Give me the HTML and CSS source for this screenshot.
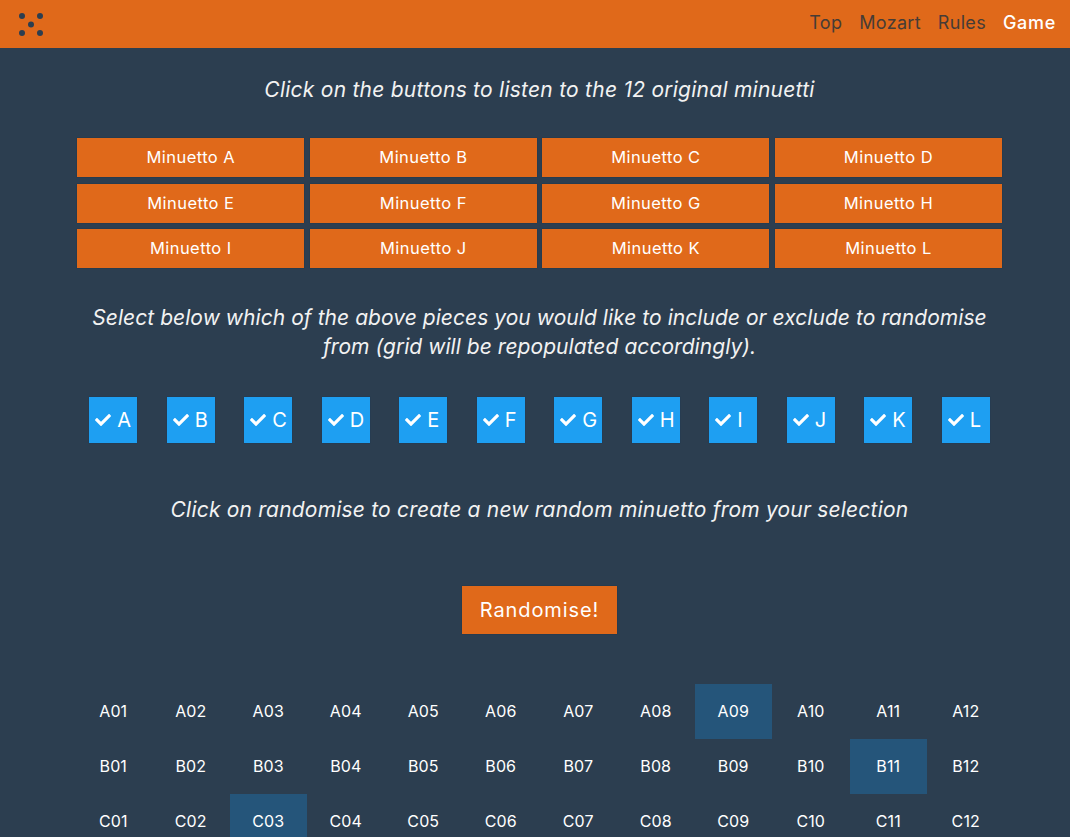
FILE: index.html
```html
<!DOCTYPE html>
<html lang="en">
<head>
<meta charset="utf-8">
<title>Mozart Minuetti</title>
<link rel="stylesheet" href="styles.css">
</head>
<body>
<svg class="defs" width="0" height="0" aria-hidden="true">
  <symbol id="tick" viewBox="0 0 512 512">
    <path d="M173.898 439.404l-166.4-166.4c-9.997-9.997-9.997-26.206 0-36.204l36.203-36.204c9.997-9.998 26.207-9.998 36.204 0L192 312.69 432.095 72.596c9.997-9.997 26.207-9.997 36.204 0l36.203 36.204c9.997 9.997 9.997 26.206 0 36.204l-294.4 294.401c-9.998 9.997-26.207 9.997-36.204-.001z"/>
  </symbol>
</svg>
<header class="navbar">
  <svg class="logo" width="26" height="24" viewBox="0 0 26 24" aria-hidden="true">
    <circle cx="4" cy="4" r="3" fill="#2c3e50"/><circle cx="22" cy="4" r="3" fill="#2c3e50"/>
    <circle cx="13" cy="12.500" r="3" fill="#2c3e50"/>
    <circle cx="4" cy="21" r="3" fill="#2c3e50"/><circle cx="22" cy="21" r="3" fill="#2c3e50"/>
  </svg>
  <nav class="nav-links">
    <a class="nav-link">Top</a><a class="nav-link">Mozart</a><a class="nav-link">Rules</a><a class="nav-link active">Game</a>
  </nav>
</header>
<main class="content">
  <p class="lead lead-first">Click on the buttons to listen to the 12 original minuetti</p>
  <div class="pieces">
    <button class="piece">Minuetto A</button><button class="piece">Minuetto B</button><button class="piece">Minuetto C</button><button class="piece">Minuetto D</button>
    <button class="piece">Minuetto E</button><button class="piece">Minuetto F</button><button class="piece">Minuetto G</button><button class="piece">Minuetto H</button>
    <button class="piece">Minuetto I</button><button class="piece">Minuetto J</button><button class="piece">Minuetto K</button><button class="piece">Minuetto L</button>
  </div>
  <p class="lead lead-select">Select below which of the above pieces you would like to include or exclude to randomise from (grid will be repopulated accordingly).</p>
  <div class="checks">
    <div class="check"><svg class="tick"><use href="#tick"/></svg>A</div>
    <div class="check"><svg class="tick"><use href="#tick"/></svg>B</div>
    <div class="check"><svg class="tick"><use href="#tick"/></svg>C</div>
    <div class="check"><svg class="tick"><use href="#tick"/></svg>D</div>
    <div class="check"><svg class="tick"><use href="#tick"/></svg>E</div>
    <div class="check"><svg class="tick"><use href="#tick"/></svg>F</div>
    <div class="check"><svg class="tick"><use href="#tick"/></svg>G</div>
    <div class="check"><svg class="tick"><use href="#tick"/></svg>H</div>
    <div class="check"><svg class="tick"><use href="#tick"/></svg>I</div>
    <div class="check"><svg class="tick"><use href="#tick"/></svg>J</div>
    <div class="check"><svg class="tick"><use href="#tick"/></svg>K</div>
    <div class="check"><svg class="tick"><use href="#tick"/></svg>L</div>
  </div>
  <p class="lead lead-random">Click on randomise to create a new random minuetto from your selection</p>
  <div class="action"><button class="randomise">Randomise!</button></div>
  <div class="grid">
    <div class="cell">A01</div><div class="cell">A02</div><div class="cell">A03</div><div class="cell">A04</div><div class="cell">A05</div><div class="cell">A06</div><div class="cell">A07</div><div class="cell">A08</div><div class="cell on">A09</div><div class="cell">A10</div><div class="cell">A11</div><div class="cell">A12</div>
    <div class="cell">B01</div><div class="cell">B02</div><div class="cell">B03</div><div class="cell">B04</div><div class="cell">B05</div><div class="cell">B06</div><div class="cell">B07</div><div class="cell">B08</div><div class="cell">B09</div><div class="cell">B10</div><div class="cell on">B11</div><div class="cell">B12</div>
    <div class="cell">C01</div><div class="cell">C02</div><div class="cell on">C03</div><div class="cell">C04</div><div class="cell">C05</div><div class="cell">C06</div><div class="cell">C07</div><div class="cell">C08</div><div class="cell">C09</div><div class="cell">C10</div><div class="cell">C11</div><div class="cell">C12</div>
  </div>
</main>
</body>
</html>
```
FILE: styles.css
```css
* { box-sizing: border-box; }
html, body { margin: 0; height: 837px; overflow: hidden; }
body { background: #2c3e50; color: #ecf0f1; font-family: "Inter", "Liberation Sans", sans-serif; }
.defs { position: absolute; }
.navbar { height: 48px; background: #e0691a; display: flex; align-items: center; justify-content: space-between; padding: 0 14px 0 18px; }
.logo { display: block; margin-bottom: 1px; }
.nav-links { display: flex; gap: 17px; padding-bottom: 3px; }
.nav-link { font-size: 18px; letter-spacing: .3px; font-weight: 400; color: #463c36; }
.nav-link.active { color: #fff; font-weight: 500; letter-spacing: .7px; }
.content { width: 930px; margin: 0 0 0 74.500px; }
.lead { margin: 0; font-size: 21px; letter-spacing: .25px; font-style: italic; line-height: 29px; text-align: center; color: #f2f2f2; }
.lead-first { padding-top: 27px; height: 90px; }
.pieces { display: grid; grid-template-columns: repeat(4, 1fr); gap: 6.250px 5.500px; padding: 0 2.500px 0 2.750px; }
.piece { height: 39.300px; padding: 0 0 1px; border: 0; background: #e0691a; color: #fff; font: 400 16.500px "Inter", sans-serif; letter-spacing: .45px; box-shadow: 0 0 1px #17324a; }
.lead-select { padding-top: 34.500px; height: 128.600px; letter-spacing: .05px; }
.checks { display: grid; grid-template-columns: repeat(12, 1fr); }
.check { width: 48px; height: 46.500px; justify-self: center; background: #1e9ff2; display: flex; align-items: center; gap: 6px; padding-left: 6px; font-size: 20px; color: #fff; box-shadow: 0 0 1px #123a5c; }
.tick { width: 16px; height: 16px; fill: #fff; }
.lead-random { padding-top: 51.500px; height: 142.600px; letter-spacing: .2px; }
.action { display: flex; justify-content: center; }
.randomise { width: 155px; height: 48px; border: 0; padding: 0; background: #e0691a; color: #fff; font: 400 20px "Inter", sans-serif; letter-spacing: .9px; box-shadow: 0 0 1px #17324a; }
.grid { display: grid; grid-template-columns: repeat(12, 1fr); grid-auto-rows: 55px; margin-top: 50px; }
.cell { display: flex; align-items: center; justify-content: center; padding-bottom: 2px; font-size: 16px; font-weight: 400; letter-spacing: .1px; color: #fff; }
.cell.on { background: #25557a; }
```
